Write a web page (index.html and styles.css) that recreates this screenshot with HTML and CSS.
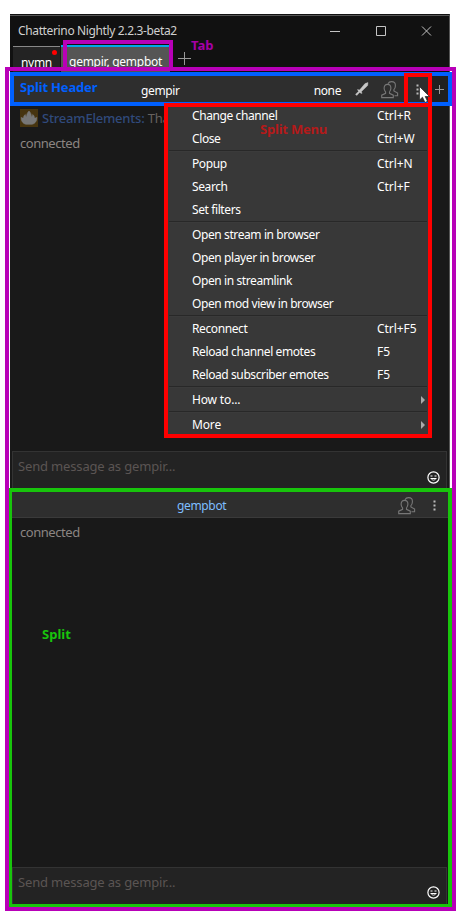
FILE: index.html
```html
<!DOCTYPE html>
<html lang="en">
<head>
<meta charset="utf-8">
<title>Chatterino</title>
<link rel="stylesheet" href="styles.css">
</head>
<body>
<svg class="defs" width="0" height="0">
  <symbol id="people" viewBox="0 0 18 18">
    <g fill="none" stroke="#777" stroke-width="1.1">
      <path d="M7 2.700Q8 .6 10.500 .6Q14.700 .6 14.400 5Q14.300 7.400 12.900 8.700V10L16.600 12V14.800H13.500"/>
      <path d="M6.500 3.400Q10 3.400 9.900 7.300Q9.800 9.500 8.500 11V12.300L12.300 14.200V16.600H.7V14.200L4.600 12.300V11Q3.100 9.500 3.100 7.300Q3.100 3.400 6.500 3.400Z"/>
    </g>
  </symbol>
  <symbol id="smile" viewBox="0 0 13 13">
    <circle cx="6.5" cy="6.5" r="5.6" fill="none" stroke="#fff" stroke-width="1.2"/>
    <path d="M3.500 5H5.500M7.500 5H9.500M3.500 7.500H9.500" stroke="#fff"/>
    <path d="M4.500 8.500Q6.500 9.800 8.500 8.500" fill="none" stroke="#fff" stroke-width=".8"/>
  </symbol>
  <symbol id="dots" viewBox="0 0 3 12">
    <path d="M.5 .5h2v2h-2zM.5 4.500h2v2h-2zM.5 8.500h2v2h-2z" fill="#bbb"/>
  </symbol>
</svg>
<div class="window">
  <header class="titlebar">
    <span class="title">Chatterino Nightly 2.2.3-beta2</span>
    <svg class="controls" width="104" height="12" viewBox="0 0 104 12" fill="none" stroke="#c4c4c4">
      <path d="M0 6.500H10M46.500 1.500H55.500V10.500H46.500ZM92 1.500L101 10.500M101 1.500L92 10.500"/>
    </svg>
  </header>
  <nav class="tabs">
    <div class="tab">nymn<i class="live"></i></div>
    <div class="tab active">gempir, gempbot</div>
    <svg class="add" width="13" height="13"><path d="M6.500 0V13M0 6.500H13" stroke="#999"/></svg>
  </nav>
  <section class="split first">
    <div class="head">
      <span class="channel">gempir</span>
      <span class="mode">none</span>
      <svg class="sword" width="14" height="14" viewBox="0 0 14 14"><path d="M13 .5L12.700 3.500L6.500 9.500L7 11.500L5.500 11L4.500 10.500L1.800 13.500L.5 12.200L3.500 9.500L2.500 7.500L4.500 8L10 1.600Z" fill="#c7c7c7" stroke="#c7c7c7" stroke-width=".4"/></svg>
      <svg class="people" width="18" height="18"><use href="#people"/></svg>
      <svg class="dots" width="3" height="12"><use href="#dots"/></svg>
      <span class="addsplit"><svg width="9" height="9"><path d="M4.500 0V9M0 4.500H9" stroke="#999"/></svg></span>
    </div>
    <div class="messages">
      <div class="message">
        <svg class="badge" width="18" height="18" viewBox="0 0 18 18"><path d="M0 0H18V18H0Z" fill="#46340f"/><path d="M9 2C7.500 3.500 6.300 5.500 6.700 8C5.800 7.500 5.500 6.500 5.300 5.500C4 6.500 3.500 7.500 3.700 9C2.800 9 2 8.800 1.200 8.400C1 12 3 14.800 6 15.300H12C15 14.800 17 12 16.800 8.400C16 8.800 15.200 9 14.300 9C14.500 7.500 14 6.500 12.700 5.500C12.500 6.500 12.200 7.500 11.300 8C11.700 5.500 10.500 3.500 9 2Z" fill="#777" stroke="#777" stroke-width=".6"/></svg>
        <span class="line"><b class="user">StreamElements:</b> Thanks</span>
      </div>
      <div class="message connected">connected</div>
    </div>
    <div class="input"><span>Send message as gempir...</span><svg class="smile" width="13" height="13"><use href="#smile"/></svg></div>
  </section>
  <section class="split second">
    <div class="head">
      <span class="channel other">gempbot</span>
      <svg class="people" width="18" height="18"><use href="#people"/></svg>
      <svg class="dots" width="3" height="12"><use href="#dots"/></svg>
    </div>
    <div class="messages"><div class="message connected">connected</div></div>
    <div class="input"><span>Send message as gempir...</span><svg class="smile" width="13" height="13"><use href="#smile"/></svg></div>
  </section>
</div>

<div class="outline o-split"></div>
<div class="outline o-tab"></div>
<div class="outline o-header"></div>
<div class="outline o-green"></div>
<div class="menu">
  <div class="item"><span>Change channel</span><kbd>Ctrl+R</kbd></div>
  <div class="item"><span>Close</span><kbd>Ctrl+W</kbd></div>
  <hr>
  <div class="item"><span>Popup</span><kbd>Ctrl+N</kbd></div>
  <div class="item"><span>Search</span><kbd>Ctrl+F</kbd></div>
  <div class="item"><span>Set filters</span></div>
  <hr>
  <div class="item"><span>Open stream in browser</span></div>
  <div class="item"><span>Open player in browser</span></div>
  <div class="item"><span>Open in streamlink</span></div>
  <div class="item"><span>Open mod view in browser</span></div>
  <hr>
  <div class="item"><span>Reconnect</span><kbd>Ctrl+F5</kbd></div>
  <div class="item"><span>Reload channel emotes</span><kbd>F5</kbd></div>
  <div class="item"><span>Reload subscriber emotes</span><kbd>F5</kbd></div>
  <hr>
  <div class="item"><span class="loose">How to...</span><i class="arrow"></i></div>
  <hr>
  <div class="item"><span class="loose">More</span><i class="arrow"></i></div>
</div>
<div class="outline o-button"></div>
<svg class="cursor" width="12" height="18" viewBox="0 0 12 18"><path d="M.5 .5V14L3.500 11.200L6 16.500L8.500 15.300L6.200 10.500H10.500Z" fill="#fff" stroke="#222" stroke-width=".7"/></svg>
<div class="note n-tab">Tab</div>
<div class="note n-header">Split Header</div>
<div class="note n-menu">Split Menu</div>
<div class="note n-split">Split</div>
</body>
</html>
```
FILE: styles.css
```css
* { box-sizing: border-box; }
body {
  margin: 0;
  width: 460px;
  height: 920px;
  overflow: hidden;
  position: relative;
  background: #fff;
  font: 12px/16px "Noto Sans", "Open Sans", sans-serif;
  color: #fff;
  white-space: nowrap;
}
svg { display: block; flex: none; }
.defs { position: absolute; }
.window {
  width: 440px;
  height: 894px;
  margin: 14px 0 0 10px;
  background: #111;
  border-right: 1px solid #555;
  border-top: 1px solid #111;
  box-shadow: inset 0 1px #555;
  display: flex;
  flex-direction: column;
}
.titlebar { height: 30px; display: flex; align-items: center; padding: 1px 14px 0 8px; justify-content: space-between; color: #d0d0d0; }
.title { letter-spacing: -.36px; }
.controls { margin-right: 1px; }
.tabs { height: 27px; display: flex; padding-left: 3px; align-items: flex-start; }
.tab { position: relative; width: 47px; height: 26px; margin-top: 1px; margin-right: 1px; padding: 8px 0 0 8px; background: #232323; border-top: 1px solid #888; overflow: hidden; letter-spacing: -.3px; }
.tab.active { width: 109px; height: 27px; margin-top: 0; padding-top: 7px; background: #555; border-top: 2px solid #00a8e8; letter-spacing: -.25px; }
.live { position: absolute; right: 3px; top: 3px; width: 5px; height: 5px; border-radius: 50%; background: #f00; }
.add { margin: 7px 0 0 7px; }
.split { display: flex; flex-direction: column; background: #191919; }
.split.first { height: 416px; }
.split.second { height: 416px; }
.head { height: 34px; flex: none; display: flex; align-items: center; background: #2e2e2e; }
.channel, .mode { padding-top: 4px; letter-spacing: -.35px; }
.first .channel { width: 173px; padding-left: 131px; }
.mode { margin-left: 131px; width: 28px; text-indent: 1px; }
.sword { margin-left: 14px; }
.head .people { margin: 2px 0 0 12px; }
.head .dots { margin: 2px 0 0 17px; }
.addsplit { margin-left: 12px; width: 19px; height: 34px; background: #202020; display: flex; align-items: center; justify-content: center; }
.messages { flex: 1; padding: 1px 10px; font-size: 13px; color: #8b8582; }
.first .messages { padding-top: 0; }
.first .message:first-child { margin-top: -1px; }
.message { height: 26px; display: flex; align-items: center; gap: 4px; letter-spacing: -.45px; }
.first .connected { margin-top: -1px; }
.line { letter-spacing: -.2px; color: #66615f; }
.user { font-weight: 500; color: #304a7c; }
.input { height: 37px; flex: none; margin: 0 2px; background: #232323; border: 1px solid #333; border-bottom: 0; display: flex; justify-content: space-between; padding: 6px 6px 0 5px; font-size: 13px; letter-spacing: -.16px; color: #5b5553; }
.smile { margin-top: 13px; }
.second .smile { margin-top: 12px; }
.second .head { height: 30px; padding-top: 4px; border-bottom: 1px solid #3a3a3a; }
.other { width: 220px; padding: 3px 0 0 167px; color: #7fbfff; }
.second .head .people { margin-left: 168px; }
.second .head .dots { margin-left: 17px; }
.outline { position: absolute; border: 4px solid #b800b8; }
.o-split { left: 5px; top: 67px; width: 451px; height: 844px; }
.o-tab { left: 63px; top: 40px; width: 110px; height: 31px; }
.o-header { left: 10px; top: 72px; width: 442px; height: 34px; border-color: #0060ff; }
.o-green { left: 9px; top: 488px; width: 443px; height: 419px; border-color: #18c40c; border-left-width: 3px; border-bottom-width: 3px; }
.o-button { left: 404px; top: 73px; width: 28px; height: 34px; border-color: #f00; }
.menu { position: absolute; left: 164px; top: 103px; width: 268px; height: 335px; border: 4px solid #f00; background: #383838; display: flex; flex-direction: column; }
.item { height: 23px; flex: none; display: flex; align-items: center; padding-left: 24px; }
.item:first-child { margin-top: -3px; padding-top: 1px; }
.item span { width: 185px; letter-spacing: -.4px; }
.item .loose { letter-spacing: -.15px; }
.item kbd { font: inherit; letter-spacing: -.05px; }
.menu hr { width: 258px; height: 2px; flex: none; margin: 0 1px; border: 0; border-top: 1px solid #282828; background: #3b3b3b; }
.arrow { margin-left: 44px; border: solid transparent; border-width: 4px 0 4px 4px; border-left-color: #aaa; }
.cursor { position: absolute; left: 419px; top: 86px; }
.note { position: absolute; font-weight: 700; font-size: 13px; line-height: 18px; }
.n-tab { left: 191px; top: 36px; color: #a500a5; }
.n-header { left: 20px; top: 78px; color: #0060ff; letter-spacing: -.18px; }
.n-menu { left: 260px; top: 120px; color: #b41a1a; letter-spacing: -.2px; }
.n-split { left: 42px; top: 625px; color: #18c40c; }
```
